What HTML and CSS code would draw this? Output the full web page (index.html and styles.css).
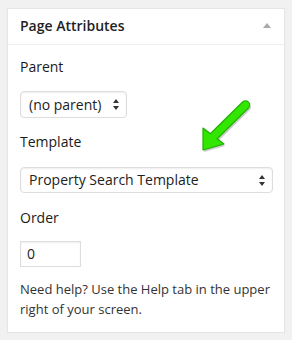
FILE: index.html
```html
<!doctype html>
<html lang="en">
  <head>
    <meta charset="UTF-8" />
    <meta name="viewport" content="width=device-width, initial-scale=1.0" />
    <title>Page Attributes</title>
    <link rel="stylesheet" href="styles.css">
  </head>
  <body>
    <div class="wrap">
      <div class="postbox">
        <div class="postbox-header">
          <h2>Page Attributes</h2>
          <span class="toggle-arrow"></span>
        </div>

        <div class="inside">
          <p class="field-label">Parent</p>
          <div class="select select-small">
            <span>(no parent)</span>
            <svg class="updown" width="6" height="11" viewBox="0 0 6 11">
              <path d="M3 0 L6 4 L0 4 Z M0 7 L6 7 L3 11 Z" fill="#333" />
            </svg>
          </div>

          <p class="field-label">Template</p>
          <div class="select select-wide">
            <span>Property Search Template</span>
            <svg class="updown" width="6" height="11" viewBox="0 0 6 11">
              <path d="M3 0 L6 4 L0 4 Z M0 7 L6 7 L3 11 Z" fill="#333" />
            </svg>
          </div>

          <p class="field-label">Order</p>
          <div class="text-input">0</div>

          <p class="help">Need help? Use the Help tab in the upper right of your screen.</p>
        </div>

        <!-- green pointer drawn over the box -->
        <svg class="pointer" width="60" height="60" viewBox="195 95 60 60">
          <g opacity="0.2" transform="translate(1 2)">
            <line x1="244.5" y1="104" x2="213" y2="135" stroke="#000" stroke-width="9" stroke-linecap="round" />
            <polygon points="202,127 223,143 202,149" fill="#000" />
          </g>
          <line x1="244.5" y1="104" x2="213" y2="135" stroke="#1fb000" stroke-width="9.5" stroke-linecap="round" />
          <polygon points="202,127 223,143 202,149" fill="#33e600" stroke="#1fb000" stroke-width="1.2" stroke-linejoin="round" />
          <line x1="244.5" y1="104" x2="211" y2="137" stroke="#33e600" stroke-width="7.3" stroke-linecap="round" />
        </svg>
      </div>
    </div>
  </body>
</html>
```

FILE: styles.css
```css
* {
  margin: 0;
  padding: 0;
  box-sizing: border-box;
}

body {
  font-family: "Open Sans", "Noto Sans", sans-serif;
  background: #f1f1f1;
  color: #222;
}

.wrap {
  padding: 8px 7px 0 7px;
}

.postbox {
  position: relative;
  width: 278px;
  background: #fff;
  border: 1px solid #e5e5e5;
  box-shadow: 0 1px 1px rgba(0, 0, 0, 0.04);
}

.postbox-header {
  display: flex;
  align-items: center;
  justify-content: space-between;
  padding: 7px 13px 8px 12px;
  border-bottom: 1px solid #eee;
}

.postbox-header h2 {
  font-size: 14px;
  font-weight: 600;
  line-height: 20px;
  color: #222;
}

.toggle-arrow {
  width: 0;
  height: 0;
  border-left: 4px solid transparent;
  border-right: 4px solid transparent;
  border-bottom: 5px solid #aaa;
  margin-top: -2px;
}

.inside {
  padding: 12px 12px 13px 12px;
}

.field-label {
  font-size: 14px;
  font-weight: 400;
  line-height: 20px;
  color: #1a1a1a;
}

.select {
  display: flex;
  align-items: center;
  justify-content: space-between;
  background: #fff;
  border: 1px solid #ddd;
  border-radius: 4px;
  box-shadow: inset 0 1px 2px rgba(0, 0, 0, 0.07);
  font-size: 14px;
  line-height: 20px;
  color: #222;
  padding: 0 7px 0 8px;
}

.select-small {
  width: 107px;
  height: 27px;
  margin: 14px 0 14px 0;
}

.select-wide {
  width: 253px;
  height: 26px;
  margin: 15px 0 15px 0;
}

.updown {
  display: block;
}

.text-input {
  width: 61px;
  height: 26px;
  margin-top: 13px;
  border: 1px solid #ddd;
  box-shadow: inset 0 1px 2px rgba(0, 0, 0, 0.07);
  font-size: 14px;
  line-height: 24px;
  padding-left: 6px;
  color: #222;
}

.help {
  margin-top: 13px;
  font-size: 13px;
  line-height: 19.5px;
  color: #333;
}

.pointer {
  position: absolute;
  left: 188px;
  top: 87px;
}
```
